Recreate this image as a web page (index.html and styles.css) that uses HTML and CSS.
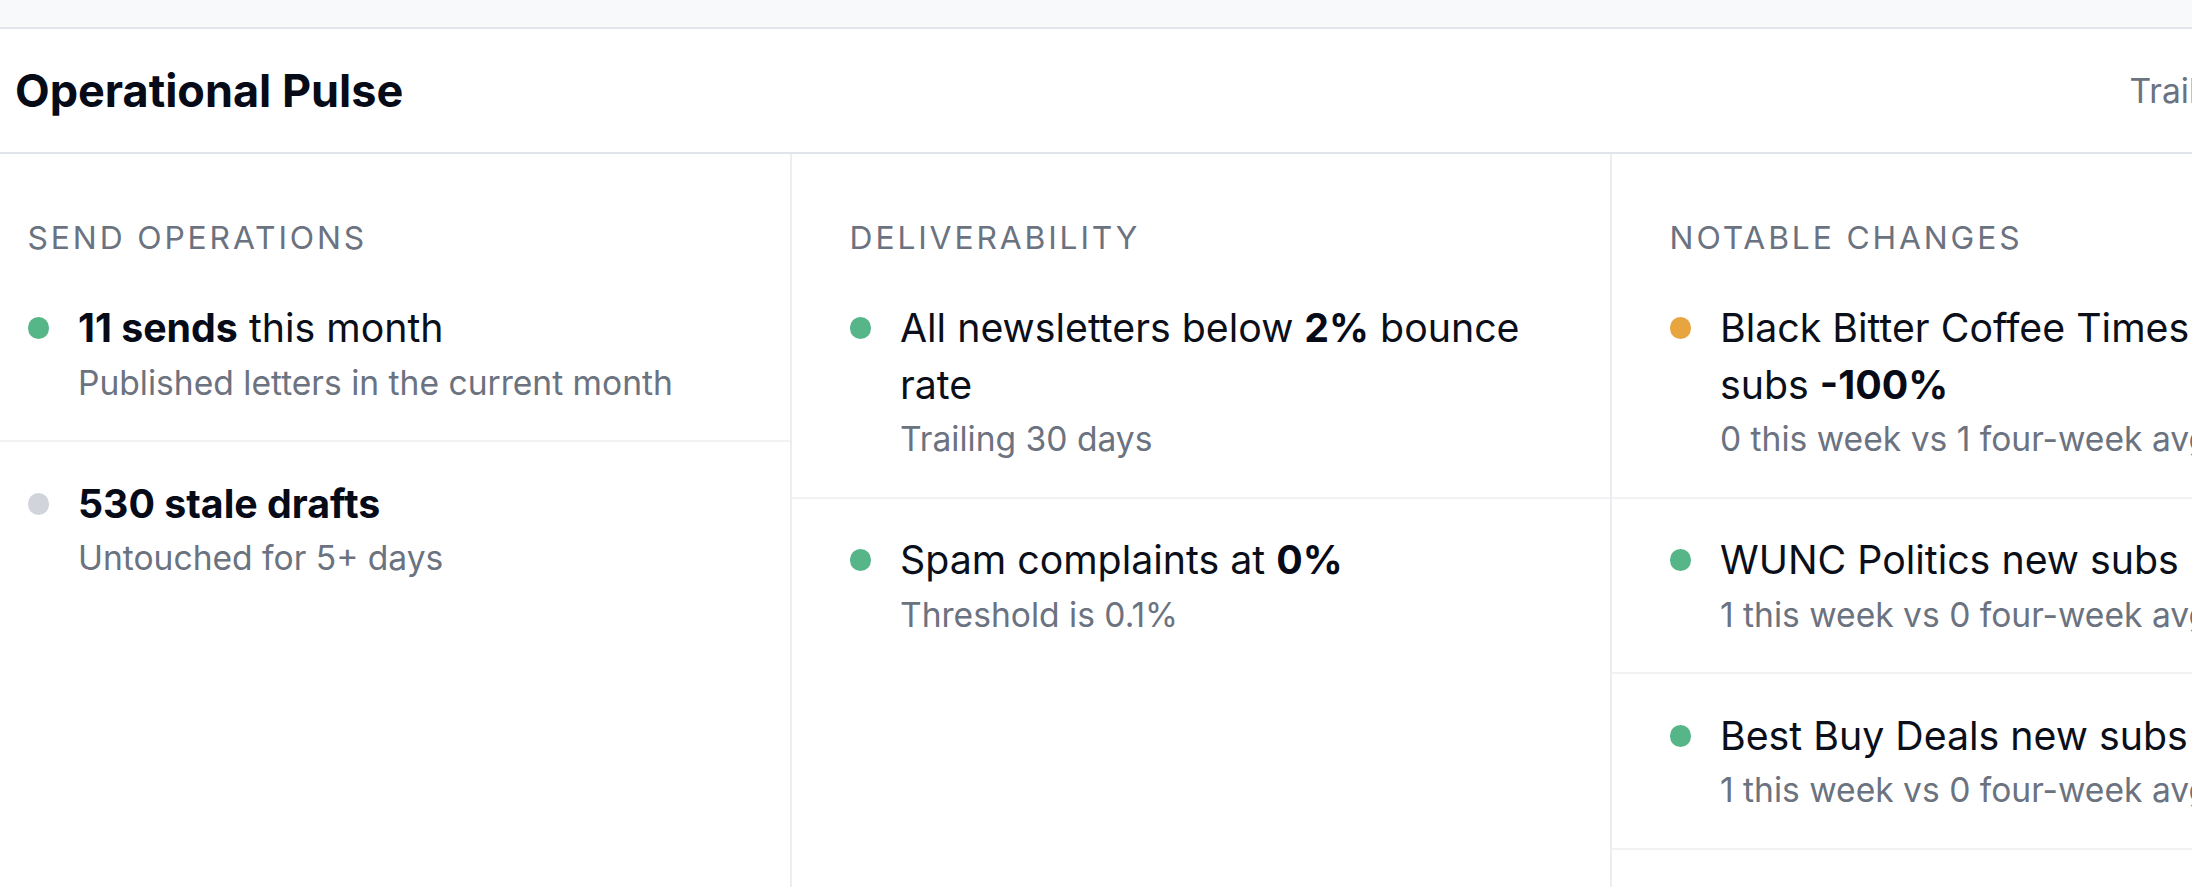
FILE: index.html
```html
<!DOCTYPE html>
<html lang="en">
<head>
<meta charset="utf-8">
<title>Operational Pulse</title>
<link rel="stylesheet" href="styles.css">
</head>
<body>
<div class="page">
  <div class="page-strip"></div>
  <section class="pulse">
    <header class="pulse-head">
      <h2 class="pulse-title">Operational Pulse</h2>
      <span class="pulse-range">Trailing 30 days</span>
    </header>
    <div class="pulse-grid">
      <div class="pulse-col">
        <h3 class="col-label">Send operations</h3>
        <ul class="items">
          <li class="item">
            <span class="dot dot-ok"></span>
            <div class="item-body">
              <p class="headline"><strong>11 sends</strong> this month</p>
              <p class="detail">Published letters in the current month</p>
            </div>
          </li>
          <li class="item">
            <span class="dot dot-muted"></span>
            <div class="item-body">
              <p class="headline"><strong>530 stale drafts</strong></p>
              <p class="detail">Untouched for 5+ days</p>
            </div>
          </li>
        </ul>
      </div>
      <div class="pulse-col">
        <h3 class="col-label">Deliverability</h3>
        <ul class="items">
          <li class="item">
            <span class="dot dot-ok"></span>
            <div class="item-body">
              <p class="headline">All newsletters below <strong>2%</strong> bounce rate</p>
              <p class="detail">Trailing 30 days</p>
            </div>
          </li>
          <li class="item">
            <span class="dot dot-ok"></span>
            <div class="item-body">
              <p class="headline">Spam complaints at <strong>0%</strong></p>
              <p class="detail">Threshold is 0.1%</p>
            </div>
          </li>
        </ul>
      </div>
      <div class="pulse-col">
        <h3 class="col-label">Notable changes</h3>
        <ul class="items">
          <li class="item">
            <span class="dot dot-warn"></span>
            <div class="item-body">
              <p class="headline">Black Bitter Coffee Times new subs <strong>-100%</strong></p>
              <p class="detail">0 this week vs 1 four-week avg</p>
            </div>
          </li>
          <li class="item">
            <span class="dot dot-ok"></span>
            <div class="item-body">
              <p class="headline">WUNC Politics new subs <strong>(new)</strong></p>
              <p class="detail">1 this week vs 0 four-week avg</p>
            </div>
          </li>
          <li class="item">
            <span class="dot dot-ok"></span>
            <div class="item-body">
              <p class="headline">Best Buy Deals new subs <strong>(new)</strong></p>
              <p class="detail">1 this week vs 0 four-week avg</p>
            </div>
          </li>
          <li class="item">
            <span class="dot dot-ok"></span>
            <div class="item-body">
              <p class="headline">Morning Brief new subs <strong>+12%</strong></p>
              <p class="detail">28 this week vs 25 four-week avg</p>
            </div>
          </li>
        </ul>
      </div>
    </div>
  </section>
</div>
</body>
</html>
```

FILE: styles.css
```css
html,
body {
  margin: 0;
  height: 100%;
}

body {
  font-family: Inter, "Noto Sans", "Liberation Sans", sans-serif;
  background: #ffffff;
  color: #0b0f19;
  overflow: hidden;
}

/* the panel is wider than the window and sits scrolled a little to the right */
.page {
  width: 2462px;
  margin-left: -30px;
  min-height: 100vh;
  display: flex;
  flex-direction: column;
}

.page-strip {
  height: 27px;
  background: #f8f9fb;
  flex: none;
}

.pulse {
  flex: 1;
  display: flex;
  flex-direction: column;
  background: #ffffff;
  border-top: 2px solid #e1e4e8;
}

.pulse-head {
  flex: none;
  height: 123px;
  display: flex;
  align-items: center;
  justify-content: space-between;
  padding: 0 50px 0 45px;
  border-bottom: 2px solid #e1e4e8;
}

.pulse-title {
  margin: 0;
  font-size: 45px;
  font-weight: 700;
  color: #070b18;
}

.pulse-range {
  font-size: 33.6px;
  color: #6b7280;
}

.pulse-grid {
  flex: 1;
  display: grid;
  grid-template-columns: repeat(3, 820px);
}

.pulse-col {
  padding-top: 63.5px;
}

.pulse-col + .pulse-col {
  border-left: 2px solid #ebedf0;
}

.col-label {
  margin: 0 0 10px;
  padding: 0 57.6px;
  font-size: 31.8px;
  font-weight: 400;
  line-height: normal;
  letter-spacing: 0.09em;
  text-transform: uppercase;
  color: #6b7280;
}

.items {
  list-style: none;
  margin: 0;
  padding: 0;
}

.item {
  display: flex;
  align-items: flex-start;
  gap: 28.8px;
  padding: 33.6px 57.6px;
}

.item + .item {
  border-top: 2px solid #f1f2f4;
}

.dot {
  flex: none;
  width: 21.6px;
  height: 21.6px;
  border-radius: 50%;
  margin-top: 17.4px;
}

.dot-ok {
  background: #56b687;
}

.dot-warn {
  background: #e8a43e;
}

.dot-muted {
  background: #d1d5db;
}

.item-body {
  min-width: 0;
}

.headline {
  margin: 0;
  font-size: 39.3px;
  line-height: 56.4px;
  color: #0b0f19;
}

.headline strong {
  font-weight: 700;
  color: #070b18;
}

.detail {
  margin: 2px 0 0;
  font-size: 33.6px;
  line-height: 48px;
  color: #6b7280;
}
```
